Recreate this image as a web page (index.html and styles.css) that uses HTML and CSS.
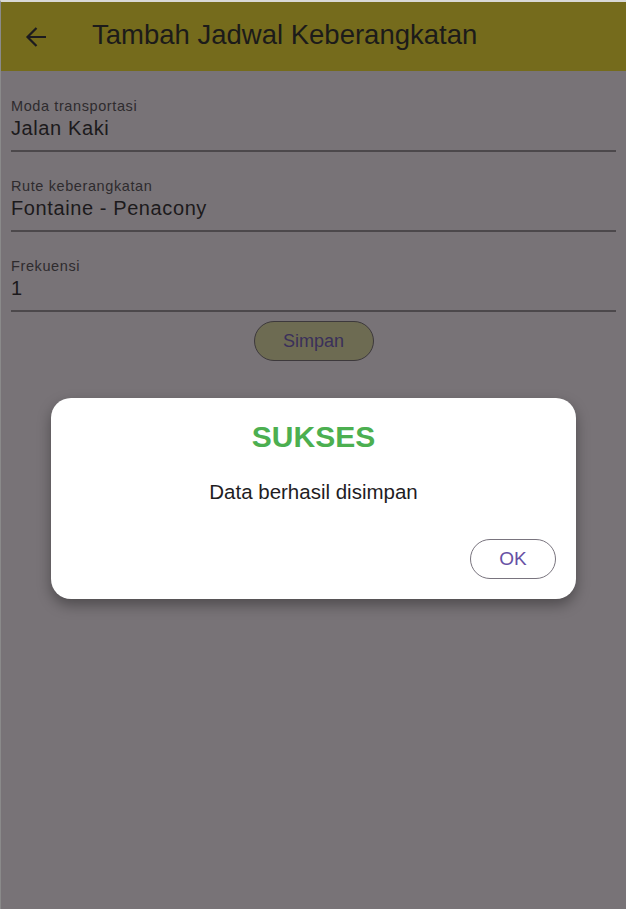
FILE: index.html
```html
<!DOCTYPE html>
<html>
<head>
<meta charset="utf-8">
<link rel="stylesheet" href="styles.css">
</head>
<body>
<div class="screen">
  <header class="appbar">
    <span class="back">
      <svg width="24" height="24" viewBox="0 0 24 24"><path d="M22 12H3.5M12.5 3L3.5 12l9 9" fill="none" stroke="#1c1b1f" stroke-width="2.2"/></svg>
    </span>
    <h1 class="title">Tambah Jadwal Keberangkatan</h1>
  </header>
  <main class="form">
    <div class="field">
      <div class="label">Moda transportasi</div>
      <div class="value">Jalan Kaki</div>
    </div>
    <div class="field">
      <div class="label">Rute keberangkatan</div>
      <div class="value">Fontaine - Penacony</div>
    </div>
    <div class="field">
      <div class="label">Frekuensi</div>
      <div class="value">1</div>
    </div>
    <div class="actions">
      <button class="save">Simpan</button>
    </div>
  </main>
  <div class="dialog">
    <div class="d-title">SUKSES</div>
    <div class="d-msg">Data berhasil disimpan</div>
    <div class="d-actions"><button class="ok">OK</button></div>
  </div>
</div>
</body>
</html>
```
FILE: styles.css
```css
* { box-sizing: border-box; }
html, body { margin: 0; padding: 0; }
body {
  width: 626px; height: 909px; overflow: hidden;
  font-family: "Liberation Sans", Arial, sans-serif;
  background: #787377;
}
.screen {
  position: relative;
  width: 626px; height: 909px;
  border-top: 2px solid #d9d9d6;
  border-left: 1px solid #8a8a8a;
  background: #787377;
}
.appbar {
  height: 69px;
  background: #756b1c;
  display: flex;
  align-items: center;
  padding-left: 23px;
}
.back { width: 24px; height: 24px; display: flex; }
.title {
  margin: 0 0 3px 44px;
  font-weight: 400;
  font-size: 27.5px;
  color: #1c1b1a;
  letter-spacing: 0;
}
.form { padding: 26px 10px 0 10px; }
.field {
  border-bottom: 2px solid #4c484b;
  padding-bottom: 10px;
  margin-bottom: 25px;
}
.label {
  font-size: 14.5px;
  color: #2e2b2e;
  line-height: 18px;
  letter-spacing: 0.6px;
}
.value {
  font-size: 20px;
  color: #1c1a1c;
  line-height: 24px;
  margin-top: 1px;
  letter-spacing: 0.6px;
}
.field:nth-child(3) { margin-bottom: 9px; }
.actions { display: flex; justify-content: center; }
.save {
  width: 120px; height: 40px;
  border-radius: 20px;
  border: 1px solid #3d393c;
  background: #6d6b52;
  color: #3a305a;
  font-family: "Liberation Sans", Arial, sans-serif;
  font-size: 18px;
}
.dialog {
  position: absolute;
  left: 50px; top: 396px;
  width: 525px; height: 201px;
  background: #fff;
  border-radius: 20px;
  box-shadow: 0 6px 14px rgba(0,0,0,0.35);
  display: flex; flex-direction: column; align-items: center;
  padding-top: 22px;
}
.d-title {
  font-size: 30px; font-weight: 700;
  color: #4caf50;
  line-height: 34px;
}
.d-msg {
  margin-top: 26px;
  font-size: 20.5px; color: #1f1d1f;
  line-height: 24px;
}
.d-actions {
  align-self: stretch;
  display: flex; justify-content: flex-end;
  padding-right: 20px;
  margin-top: 35px;
}
.ok {
  width: 86px; height: 40px;
  border-radius: 20px;
  border: 1px solid #79747e;
  background: #fff;
  color: #6750a4;
  font-family: "Liberation Sans", Arial, sans-serif;
  font-size: 19px;
}
```
